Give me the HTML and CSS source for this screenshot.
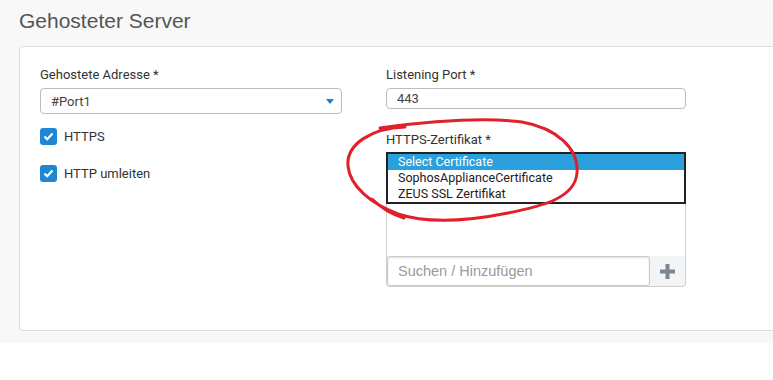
FILE: index.html
```html
<!DOCTYPE html>
<html>
<head>
  <title>Gehosteter Server</title>
  <link rel="stylesheet" href="styles.css">
</head>
<body>
  <div class="page">
    <h1 class="title">Gehosteter Server</h1>

    <div class="card">
      <div class="col">
        <label class="field-label">Gehostete Adresse *</label>
        <div class="select">
          <span>#Port1</span>
          <span class="arrow"></span>
        </div>
        <div class="check-row">
          <span class="checkbox"><svg width="11" height="9" viewBox="0 0 11 9"><path d="M1.5 4.5 L4.2 7.2 L9.5 1.6" fill="none" stroke="#fff" stroke-width="2.2"/></svg></span>
          <span>HTTPS</span>
        </div>
        <div class="check-row">
          <span class="checkbox"><svg width="11" height="9" viewBox="0 0 11 9"><path d="M1.5 4.5 L4.2 7.2 L9.5 1.6" fill="none" stroke="#fff" stroke-width="2.2"/></svg></span>
          <span>HTTP umleiten</span>
        </div>
      </div>

      <div class="col">
        <label class="field-label">Listening Port *</label>
        <div class="text-input">443</div>
        <label class="field-label cert-label">HTTPS-Zertifikat *</label>
        <ul class="listbox">
          <li class="selected">Select Certificate</li>
          <li>SophosApplianceCertificate</li>
          <li>ZEUS SSL Zertifikat</li>
        </ul>
        <div class="picker">
          <div class="search-row">
            <div class="search">Suchen / Hinzufügen</div>
            <div class="add"><svg width="15" height="15" viewBox="0 0 15 15"><path d="M7.5 0 V15 M0 7.5 H15" stroke="#7b8690" stroke-width="4"/></svg></div>
          </div>
        </div>
      </div>
    </div>

    <svg class="scribble" width="773" height="380" viewBox="0 0 773 380">
      <path d="M405 127 C372 128 346 144 348 166 C350 187 372 204 398 214 C428 224 468 221 508 213 C543 206 575 198 577 173 C579 148 556 128 522 122 C482 117 432 121 380 128 M372 199 C380 207 390 214 404 218"
            fill="none" stroke="#e0212b" stroke-width="3" stroke-linecap="round"/>
    </svg>
  </div>
</body>
</html>
```

FILE: styles.css
```css
body {
  margin: 0;
  padding: 0;
  background-color: #fff;
  font-family: Roboto, "Liberation Sans", Arial, sans-serif;
  overflow: hidden;
}

.page {
  position: relative;
  background-color: #f8f8f8;
  padding: 8px 0 12px 19px;
}

.title {
  margin: 0;
  font-size: 21px;
  line-height: 26px;
  font-weight: normal;
  color: #555;
  font-family: "Liberation Sans", Arial, sans-serif;
}

.card {
  margin-top: 12px;
  width: 800px;
  height: 285px;
  box-sizing: border-box;
  padding: 20px 20px;
  background-color: #fff;
  border: 1px solid #dcdcdc;
  border-radius: 4px;
  display: grid;
  grid-template-columns: 302px 300px;
  column-gap: 44px;
  align-content: start;
}

.col {
  display: flex;
  flex-direction: column;
}

.field-label {
  font-size: 13px;
  line-height: 16px;
  color: #333;
  margin-bottom: 5px;
}

.select {
  height: 26px;
  box-sizing: border-box;
  border: 1px solid #bcbcbc;
  border-radius: 4px;
  padding: 0 7px 0 10px;
  display: flex;
  align-items: center;
  justify-content: space-between;
  font-size: 13px;
  color: #444;
}

.arrow {
  width: 0;
  height: 0;
  border-left: 4px solid transparent;
  border-right: 4px solid transparent;
  border-top: 5px solid #1a7fc4;
}

.check-row {
  display: flex;
  align-items: center;
  gap: 7px;
  margin-top: 14px;
  font-size: 13px;
  color: #333;
}

.check-row + .check-row {
  margin-top: 20px;
}

.checkbox {
  width: 17px;
  height: 17px;
  border-radius: 3px;
  background-color: #1e86d2;
  display: flex;
  align-items: center;
  justify-content: center;
}

.text-input {
  height: 21px;
  box-sizing: border-box;
  border: 1px solid #bcbcbc;
  border-radius: 4px;
  padding: 0 10px;
  font-size: 13px;
  line-height: 19px;
  color: #444;
}

.cert-label {
  margin-top: 23px;
  margin-bottom: 4px;
}

.listbox {
  list-style-type: none;
  margin: 0;
  padding: 0;
  height: 52px;
  box-sizing: border-box;
  border: 2px solid #222;
  background-color: #fff;
}

.listbox li {
  height: 16px;
  line-height: 16px;
  padding: 0 10px;
  font-size: 12.5px;
  color: #222;
}

.listbox li.selected {
  background-color: #2ba0dc;
  color: #fff;
}

.picker {
  height: 83px;
  box-sizing: border-box;
  border: 1px solid #cfcfcf;
  border-top: none;
  border-radius: 0 0 4px 4px;
  display: flex;
  flex-direction: column;
  justify-content: flex-end;
}

.search-row {
  display: flex;
  height: 30px;
  background-color: #f2f4f6;
  border-radius: 0 0 4px 4px;
}

.search {
  flex: 1;
  box-sizing: border-box;
  border: 1px solid #cbcbcb;
  border-radius: 3px;
  background-color: #fff;
  box-shadow: inset 0 1px 2px rgba(0, 0, 0, 0.12);
  padding: 0 10px;
  font-family: "Liberation Sans", Arial, sans-serif;
  font-size: 14.5px;
  line-height: 28px;
  color: #9a9a9a;
}

.add {
  width: 35px;
  display: flex;
  align-items: center;
  justify-content: center;
}

.scribble {
  position: absolute;
  left: 0;
  top: 0;
  pointer-events: none;
}
```
